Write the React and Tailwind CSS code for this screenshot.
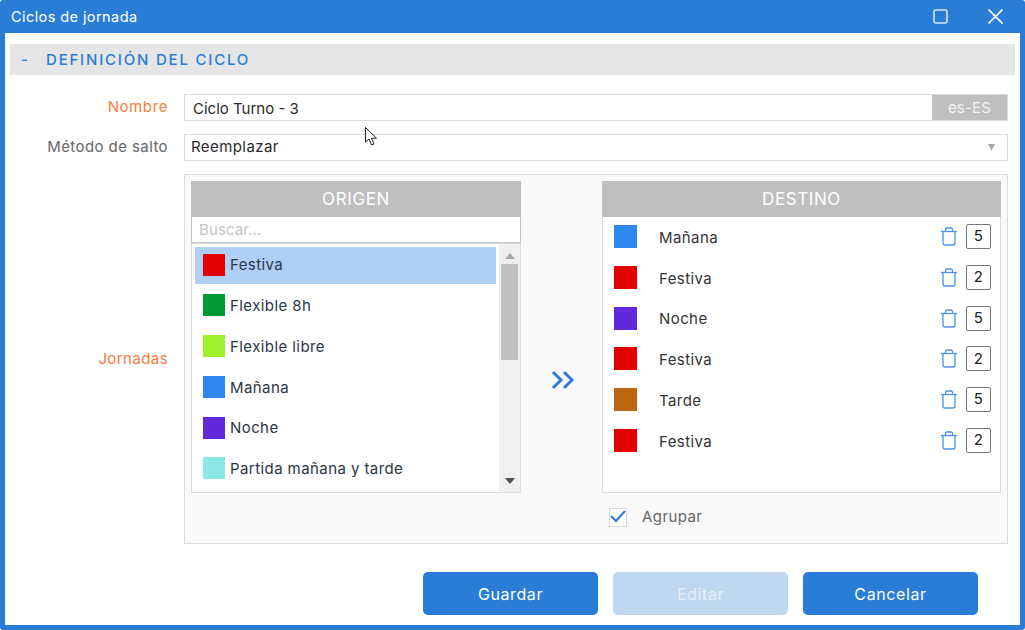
const font = "font-['Inter','Liberation_Sans',sans-serif]";

const origen = [
  { name: 'Festiva', color: 'bg-[#e30000]', selected: true },
  { name: 'Flexible 8h', color: 'bg-[#009a35]' },
  { name: 'Flexible libre', color: 'bg-[#a2ef2d]' },
  { name: 'Mañana', color: 'bg-[#2d89ef]' },
  { name: 'Noche', color: 'bg-[#602adb]' },
  { name: 'Partida mañana y tarde', color: 'bg-[#8fe8e8]' },
];

const destino = [
  { name: 'Mañana', color: 'bg-[#2d89ef]', days: 5 },
  { name: 'Festiva', color: 'bg-[#e30000]', days: 2 },
  { name: 'Noche', color: 'bg-[#602adb]', days: 5 },
  { name: 'Festiva', color: 'bg-[#e30000]', days: 2 },
  { name: 'Tarde', color: 'bg-[#bf650f]', days: 5 },
  { name: 'Festiva', color: 'bg-[#e30000]', days: 2 },
];

const TrashIcon = () => (
  <svg width="18" height="19" viewBox="0 0 18 19" fill="none" stroke="#4a94e6" strokeWidth="1.3" className="shrink-0">
    <path d="M1 4.5h16" />
    <path d="M5.5 4.5V2.5a1.5 1.5 0 0 1 1.5-1.5h4a1.5 1.5 0 0 1 1.5 1.5v2" />
    <path d="M3 4.5v11.5a2 2 0 0 0 2 2h8a2 2 0 0 0 2-2V4.5" />
  </svg>
);

const Triangle = ({ up, fill, w = 10, h = 6 }) => (
  <svg width={w} height={h} viewBox="0 0 10 6" preserveAspectRatio="none" className="shrink-0">
    <polygon points={up ? '5,0 10,6 0,6' : '0,0 10,0 5,6'} fill={fill} />
  </svg>
);

export default function App() {
  return (
    <div className={`${font} relative flex h-[630px] w-[1025px] flex-col overflow-hidden rounded-[3px] bg-[#2a7dd6]`}>
      {/* Title bar */}
      <div className="flex h-[33px] shrink-0 items-center justify-between pl-[11px] pr-[22px] text-[14.5px] tracking-[0.42px] text-white">
        <span>Ciclos de jornada</span>
        <div className="flex items-center gap-[40px]">
          <svg width="15" height="15" viewBox="0 0 15 15" fill="none" stroke="#d8e8f8" strokeWidth="1.6">
            <rect x="1" y="1" width="13" height="13" rx="2" />
          </svg>
          <svg width="15" height="15" viewBox="0 0 15 15" fill="none" stroke="white" strokeWidth="1.7">
            <path d="M0.5 0.5l14 14M14.5 0.5l-14 14" />
          </svg>
        </div>
      </div>

      <div className="mx-[5px] mb-[5px] flex flex-1 flex-col bg-white px-[5px] pt-[11px] text-[15px] tracking-[0.42px]">
        {/* Section header */}
        <div className="flex h-[31px] shrink-0 items-center bg-[#e5e5e5] pl-[11px] pt-[1px] text-[15px] font-medium tracking-[1.8px] text-[#2a7dd6]">
          <span className="w-[25px]">-</span>
          <span>DEFINICIÓN DEL CICLO</span>
        </div>

        {/* Nombre */}
        <div className="mt-[19px] flex h-[27px] items-center">
          <label className="w-[158px] text-right tracking-[0.6px] text-[#f97b3c]">Nombre</label>
          <div className="ml-[16px] flex h-[27px] w-[824px] border border-[#dcdcdc]">
            <span className="flex-1 pl-[8px] leading-[27px] tracking-[0px] text-[#2b2b2b]">Ciclo Turno - 3</span>
            <span className="flex w-[75px] items-center justify-center bg-[#bfbfbf] pt-[1px] tracking-[0.2px] text-[#f4f4f4]">es-ES</span>
          </div>
        </div>

        {/* Metodo de salto */}
        <div className="mt-[13px] flex h-[27px] items-center">
          <label className="w-[158px] text-right text-[#666]">Método de salto</label>
          <div className="ml-[16px] flex h-[27px] w-[824px] items-center justify-between border border-[#dcdcdc] pl-[6px] pr-[12px]">
            <span className="pb-[1px] text-[#2b2b2b]">Reemplazar</span>
            <Triangle fill="#a8a8a8" w={7} h={7} />
          </div>
        </div>

        {/* Jornadas */}
        <div className="mt-[13px] flex h-[370px] items-center">
          <label className="w-[158px] text-right text-[#f97b3c]">Jornadas</label>
          <div className="ml-[16px] flex h-[370px] w-[824px] border border-[#dcdcdc] bg-[#f9f9f9] p-[6px]">
            {/* Origen */}
            <div className="flex h-[312px] w-[330px] flex-col">
              <div className="flex h-[36px] items-center justify-center bg-[#bfbfbf] pt-[1px] text-[17px] tracking-[0.6px] text-white">ORIGEN</div>
              <div className="flex h-[26px] items-center border border-t-0 border-[#c4c4c4] bg-white pl-[7px] pt-[2px] tracking-[0.1px] text-[#c4c4c4]">Buscar...</div>
              <div className="flex h-[250px] border border-[#dcdcdc] bg-white">
                <div className="flex-1 pl-[3px] pr-[3px] pt-[3px]">
                  {origen.map((item) => (
                    <div
                      key={item.name}
                      className={`mb-[3.8px] flex h-[37px] items-center gap-[5px] pl-[8px] text-[#2b3645] ${item.selected ? 'bg-[#aed0f7]' : ''}`}
                    >
                      <span className={`mb-[2px] h-[22px] w-[22px] shrink-0 ${item.color}`} />
                      <span>{item.name}</span>
                    </div>
                  ))}
                </div>
                <div className="flex w-[21px] flex-col items-center bg-[#f0f0f0] pt-[9px]">
                  <Triangle up fill="#a6a6a6" />
                  <div className="mt-[5px] h-[96px] w-[17px] bg-[#bfbfbf]" />
                  <div className="mt-auto mb-[8px]">
                    <Triangle fill="#505050" />
                  </div>
                </div>
              </div>
            </div>

            {/* Move arrows */}
            <div className="flex w-[81px] items-center justify-center pl-[2px] pt-[42px]">
              <svg width="24" height="20" viewBox="0 0 24 20" fill="none" stroke="#2a7dd6" strokeWidth="3">
                <path d="M2 2l8 8-8 8M13 2l8 8-8 8" />
              </svg>
            </div>

            {/* Destino */}
            <div className="flex w-[399px] flex-col">
              <div className="flex h-[36px] shrink-0 items-center justify-center bg-[#bfbfbf] pt-[1px] text-[17px] tracking-[0.6px] text-white">DESTINO</div>
              <div className="h-[276px] border border-t-0 border-[#dcdcdc] bg-white pl-[11px] pr-[9px] pt-[8px]">
                {destino.map((item, i) => (
                  <div key={i} className="mb-[17.8px] flex h-[23px] items-center text-[#333]">
                    <span className={`h-[23px] w-[23px] shrink-0 ${item.color}`} />
                    <span className="ml-[22px] flex-1 pt-[3px]">{item.name}</span>
                    <TrashIcon />
                    <span className="ml-[8px] flex h-[25px] w-[25px] shrink-0 items-center justify-center rounded-[2px] border border-[#777] text-[#222]">{item.days}</span>
                  </div>
                ))}
              </div>
              <div className="mt-[13px] flex items-center pl-[7px]">
                <span className="flex h-[19px] w-[18px] items-center justify-center border border-[#dcdcdc] bg-white">
                  <svg width="16" height="14" viewBox="0 0 16 14" fill="none" stroke="#2a7dd6" strokeWidth="2">
                    <path d="M1 6l5 5 9-10" />
                  </svg>
                </span>
                <span className="ml-[15px] text-[#666]">Agrupar</span>
              </div>
            </div>
          </div>
        </div>

        {/* Actions */}
        <div className="mt-[28px] flex justify-end gap-[15px] pr-[37px] text-[16px] tracking-[0.6px]">
          <button className="h-[43px] w-[175px] rounded-[5px] bg-[#2a7dd6] text-white">Guardar</button>
          <button className="h-[43px] w-[175px] rounded-[5px] bg-[#bfd7f1] text-[#e6eef7]">Editar</button>
          <button className="h-[43px] w-[175px] rounded-[5px] bg-[#2a7dd6] text-white">Cancelar</button>
        </div>
      </div>

      {/* Mouse pointer */}
      <svg width="14" height="20" viewBox="0 0 14 20" className="absolute left-[365px] top-[127px]" fill="white" stroke="#1a2030" strokeWidth="1">
        <path d="M0.5 0.5v14.5l3.5-3 2.5 6 2.5-1-2.5-5.8h5z" />
      </svg>
    </div>
  );
}
